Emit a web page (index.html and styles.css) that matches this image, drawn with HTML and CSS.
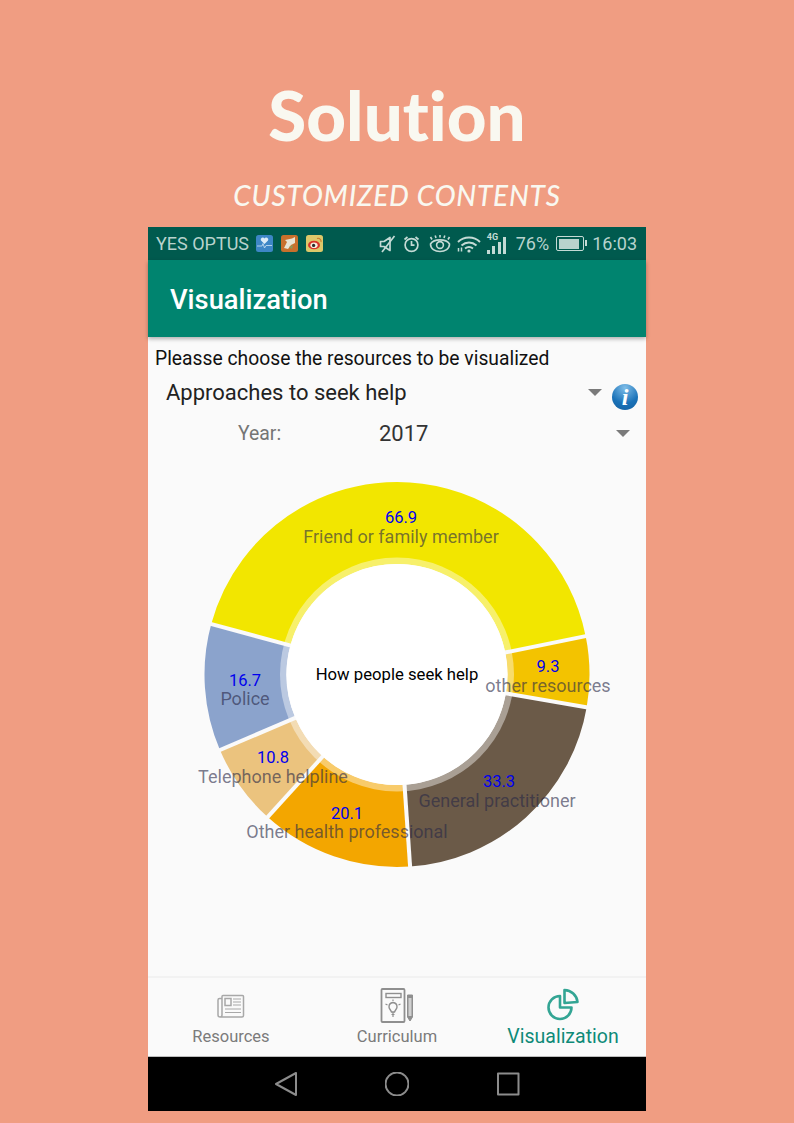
FILE: index.html
```html
<!DOCTYPE html>
<html lang="en">
<head>
    <meta charset="UTF-8">
    <meta name="viewport" content="width=device-width, initial-scale=1.0">
    <title>Solution</title>
    <link rel="stylesheet" href="styles.css">
</head>
<body>

<header class="hero">
    <h1>Solution</h1>
    <h2>CUSTOMIZED CONTENTS</h2>
</header>

<div class="phone">
    <div class="status-bar">
        <span class="carrier">YES OPTUS</span>
        <svg class="app-icon" viewBox="0 0 17 17">
            <rect width="17" height="17" rx="2.5" fill="#3d86c6"/>
            <path d="M8.5 9 L5 5.6 A2 2 0 0 1 8.5 3.6 A2 2 0 0 1 12 5.6 Z" fill="#dcecf7"/>
            <path d="M1 11 H6 L7 8.5 L8.5 13 L10 10.5 H16" fill="none" stroke="#bcd9ee" stroke-width="0.9"/>
        </svg>
        <svg class="app-icon" viewBox="0 0 17 17">
            <rect width="17" height="17" rx="2.5" fill="#c8702c"/>
            <path d="M3 13 L6 7 L4 5 L11 3.5 L14 2 L14 8 L10 10 L7 14 Z" fill="#e8e4d4"/>
            <path d="M8 12 L12 10 L11 14 Z" fill="#8a9a5a"/>
        </svg>
        <svg class="app-icon" viewBox="0 0 17 17">
            <rect width="17" height="17" rx="2.5" fill="#dcc86a"/>
            <ellipse cx="8" cy="10" rx="6" ry="4.3" fill="#d8362a"/>
            <ellipse cx="8" cy="10.2" rx="3.6" ry="2.8" fill="#f6efe0"/>
            <circle cx="7.6" cy="10.4" r="1.6" fill="#2a2a2a"/>
            <path d="M11 3.5 A3 3 0 0 1 15 7" fill="none" stroke="#c9772c" stroke-width="1.1"/>
        </svg>

        <div class="status-right">
            <svg class="s-mute" viewBox="0 0 17 18" fill="none" stroke="#c4dad5" stroke-width="1.7">
                <path d="M1.5 6.5 H5 L11 2.5 V15.5 L5 11.5 H1.5 Z" stroke-linejoin="round"/>
                <path d="M3 17 L15.5 1"/>
            </svg>
            <svg class="s-alarm" viewBox="0 0 17 18" fill="none" stroke="#c4dad5" stroke-width="1.7">
                <circle cx="8.5" cy="10" r="6.4"/>
                <path d="M8.5 6 V10.2 H11.5"/>
                <path d="M1.5 4.5 L4.5 2 M15.5 4.5 L12.5 2"/>
            </svg>
            <svg class="s-eye" viewBox="0 0 22 18" fill="none" stroke="#c4dad5" stroke-width="1.6">
                <path d="M1.5 9 C5 3.5 17 3.5 20.5 9 C20.5 14 16 16.5 11 16.5 C6 16.5 1.5 14 1.5 9 Z"/>
                <circle cx="11" cy="10" r="3.4"/>
                <path d="M3 4.5 L1.5 2 M7 3 L6.2 .5 M11 2.6 V0 M15 3 L15.8 .5 M19 4.5 L20.5 2"/>
            </svg>
            <svg class="s-wifi" viewBox="0 0 24 18" fill="none" stroke="#c4dad5" stroke-width="1.9">
                <path d="M1 7 C7 1 17 1 23 7"/>
                <path d="M4.5 10.5 C9 6.5 15 6.5 19.5 10.5"/>
                <path d="M8 13.6 C10.5 11.6 13.5 11.6 16 13.6"/>
                <circle cx="12" cy="16" r="1.6" fill="#c4dad5" stroke="none"/>
                <path d="M1.5 13 V16.5 M4.5 12.5 V16.5" stroke-width="1.5"/>
            </svg>
            <div class="s-signal">
                <span class="s-4g">4G</span>
                <i class="b1"></i><i class="b2"></i><i class="b3"></i><i class="b4"></i>
            </div>
            <span class="pct">76%</span>
            <div class="battery"><div class="battery-fill"></div></div>
            <span class="clock">16:03</span>
        </div>
    </div>

    <div class="app-bar">Visualization</div>

    <main class="content">
        <p class="prompt">Pleasse choose the resources to be visualized</p>

        <div class="select-row">
            <span class="select-value">Approaches to seek help</span>
            <span class="caret"></span>
            <div class="info-btn">i</div>
        </div>

        <div class="year-row">
            <span class="year-label">Year:</span>
            <span class="year-value">2017</span>
            <span class="caret"></span>
        </div>

        <!-- viewBox uses the page coordinates the chart was measured in -->
        <svg class="chart" viewBox="148 455 498 518">
            <g fill="none" stroke-width="82">
                <circle cx="397" cy="674.5" r="151.5" pathLength="360" stroke="#f2e600" stroke-dasharray="153.3 360" transform="rotate(195.2 397 674.5)"/>
                <circle cx="397" cy="674.5" r="151.5" pathLength="360" stroke="#f3c300" stroke-dasharray="21.3 360" transform="rotate(-11.5 397 674.5)"/>
                <circle cx="397" cy="674.5" r="151.5" pathLength="360" stroke="#6b5a48" stroke-dasharray="76.3 360" transform="rotate(9.8 397 674.5)"/>
                <circle cx="397" cy="674.5" r="151.5" pathLength="360" stroke="#f3a600" stroke-dasharray="46.1 360" transform="rotate(86.1 397 674.5)"/>
                <circle cx="397" cy="674.5" r="151.5" pathLength="360" stroke="#ebc37e" stroke-dasharray="24.7 360" transform="rotate(132.2 397 674.5)"/>
                <circle cx="397" cy="674.5" r="151.5" pathLength="360" stroke="#8ba3cc" stroke-dasharray="38.3 360" transform="rotate(156.9 397 674.5)"/>
            </g>
            <circle cx="397" cy="674.5" r="117" fill="#fff" opacity="0.42"/>
            <g stroke="#fafafa" stroke-width="4">
                <line x1="397" y1="564.5" x2="397" y2="479.5" transform="rotate(285.2 397 674.5)"/>
                <line x1="397" y1="564.5" x2="397" y2="479.5" transform="rotate(78.5 397 674.5)"/>
                <line x1="397" y1="564.5" x2="397" y2="479.5" transform="rotate(99.8 397 674.5)"/>
                <line x1="397" y1="564.5" x2="397" y2="479.5" transform="rotate(176.1 397 674.5)"/>
                <line x1="397" y1="564.5" x2="397" y2="479.5" transform="rotate(222.2 397 674.5)"/>
                <line x1="397" y1="564.5" x2="397" y2="479.5" transform="rotate(246.9 397 674.5)"/>
            </g>
            <circle cx="397" cy="674.5" r="110.5" fill="#fff"/>

            <text class="center-text" x="397" y="680">How people seek help</text>

            <text class="val" x="401" y="523">66.9</text>
            <text class="name" x="401" y="543">Friend or family member</text>
            <text class="val" x="548" y="672">9.3</text>
            <text class="name" x="548" y="692">other resources</text>
            <text class="val" x="499" y="787">33.3</text>
            <text class="name" x="497" y="807">General practitioner</text>
            <text class="val" x="347" y="819">20.1</text>
            <text class="name" x="347" y="838">Other health professional</text>
            <text class="val" x="273" y="763">10.8</text>
            <text class="name" x="273" y="783">Telephone helpline</text>
            <text class="val" x="245" y="686">16.7</text>
            <text class="name" x="245" y="705">Police</text>
        </svg>
    </main>

    <nav class="tabs">
        <div class="tab">
            <svg class="tab-icon" viewBox="0 0 36 36" fill="none" stroke="#a8a8a8" stroke-width="1.5">
                <path d="M9 10.5 H6.5 A1.5 1.5 0 0 0 5 12 V27 A2 2 0 0 0 7 29 H29 A1.5 1.5 0 0 0 30.5 27.5 V8.5 A1 1 0 0 0 29.5 7.5 H10 A1 1 0 0 0 9 8.5 V27 A2 2 0 0 1 7 29"/>
                <rect x="12" y="10.5" width="6" height="7"/>
                <path d="M20 11 H28 M20 14 H28 M20 17 H28 M12 21 H28 M12 24.5 H28" stroke-width="1.2"/>
            </svg>
            <span class="tab-label">Resources</span>
        </div>
        <div class="tab">
            <svg class="tab-icon" viewBox="0 0 36 36" fill="none" stroke="#8f8f8f" stroke-width="1.8">
                <rect x="2.5" y="1" width="23" height="33" rx="1"/>
                <rect x="7" y="5.5" width="15" height="4" stroke-width="1.4"/>
                <path d="M14 14.5 A4.5 4.5 0 0 0 10 19 C10 21 12 22 12.5 24 H15.5 C16 22 18 21 18 19 A4.5 4.5 0 0 0 14 14.5 Z" stroke-width="1.4"/>
                <path d="M12.5 26.5 H15.5 M14 24 V29 M6.5 16 L8.5 17 M21.5 16 L19.5 17 M14 11.5 V13" stroke-width="1.2"/>
                <path d="M28.5 7 H33.5 V29 L31 33 L28.5 29 Z" fill="#8f8f8f" stroke-width="1"/>
                <path d="M29.5 10 H32.5 V28 H29.5 Z" fill="#d0d0d0" stroke="none"/>
            </svg>
            <span class="tab-label">Curriculum</span>
        </div>
        <div class="tab tab-active">
            <svg class="tab-icon" viewBox="0 0 36 36" fill="none" stroke="#33a594" stroke-width="2.6" stroke-linejoin="round">
                <path d="M15 8 A11.5 11.5 0 1 0 26.5 19.5 H15 Z"/>
                <path d="M19.5 2 A13.5 13.5 0 0 1 32.5 14 L19.5 15 Z"/>
            </svg>
            <span class="tab-label">Visualization</span>
        </div>
    </nav>

    <div class="nav-bar">
        <svg class="nav-icon" viewBox="0 0 24 24" fill="none" stroke="#8c8c8c" stroke-width="2" stroke-linejoin="round">
            <path d="M22 1 V23 L2 12 Z"/>
        </svg>
        <svg class="nav-icon" viewBox="0 0 24 24" fill="none" stroke="#8c8c8c" stroke-width="2">
            <circle cx="12" cy="12" r="11.5"/>
        </svg>
        <svg class="nav-icon" viewBox="0 0 24 24" fill="none" stroke="#8c8c8c" stroke-width="2" stroke-linejoin="round">
            <rect x="2" y="1.5" width="20.5" height="21"/>
        </svg>
    </div>
</div>

</body>
</html>
```

FILE: styles.css
```css
body {
    margin: 0;
    background-color: #f09d82;
    font-family: Roboto, "Noto Sans", sans-serif;
}
.hero {
    height: 227px;
    text-align: center;
    font-family: Lato, "Open Sans", sans-serif;
    color: #f9f8f0;
    overflow: hidden;
    font-variant-ligatures: none;
}
.hero h1 {
    margin: 75px 0 0;
    font-size: 69px;
    line-height: 80px;
    font-weight: 900;
}
.hero h2 {
    margin: 22px 0 0;
    font-size: 28px;
    line-height: 36px;
    font-weight: 500;
    font-style: italic;
    letter-spacing: 0.75px;
}
.phone {
    width: 498px;
    margin: 0 auto;
    background: #fafafa;
}
.status-bar {
    height: 33px;
    background: #005a4e;
    color: #b8d3cd;
    display: flex;
    align-items: center;
    padding: 0 9px 0 8px;
    font-size: 18px;
}
.carrier {
    margin-right: 7px;
}
.app-icon {
    width: 17px;
    height: 17px;
    margin-right: 8px;
}
.status-right {
    margin-left: auto;
    display: flex;
    align-items: center;
}
.s-mute {
    width: 17px;
    height: 18px;
    margin-right: 7px;
}
.s-alarm {
    width: 17px;
    height: 18px;
    margin-right: 9px;
}
.s-eye {
    width: 22px;
    height: 18px;
    margin-right: 6px;
}
.s-wifi {
    width: 24px;
    height: 18px;
    margin-right: 6px;
}
.s-signal {
    width: 22px;
    height: 20px;
    margin-right: 7px;
    display: flex;
    align-items: flex-end;
    gap: 2.5px;
    position: relative;
}
.s-signal i {
    display: block;
    width: 3px;
    background: #c4dad5;
}
.s-signal .b1 { height: 4px; }
.s-signal .b2 { height: 8px; }
.s-signal .b3 { height: 12px; }
.s-signal .b4 { height: 17px; }
.s-4g {
    position: absolute;
    left: 0;
    top: -2px;
    font-size: 9px;
    font-weight: 700;
    color: #c4dad5;
}
.pct {
    margin-right: 7px;
}
.battery {
    width: 28px;
    height: 15px;
    border: 1.5px solid #c4dad5;
    border-radius: 2px;
    padding: 1.5px;
    box-sizing: border-box;
    margin-right: 8px;
    position: relative;
}
.battery::after {
    content: "";
    position: absolute;
    right: -4px;
    top: 3px;
    width: 2px;
    height: 6px;
    background: #c4dad5;
}
.battery-fill {
    width: 88%;
    height: 100%;
    background: #b8d3cd;
}
.app-bar {
    height: 77px;
    background: #00846f;
    color: #fff;
    font-size: 27.3px;
    font-weight: 500;
    line-height: 81px;
    padding-left: 22px;
    box-shadow: 0 2px 4px rgba(0, 0, 0, 0.3);
    position: relative;
}
.content {
    height: 639px;
    overflow: hidden;
}
.prompt {
    margin: 11px 0 0 7px;
    font-size: 19.3px;
    line-height: 22px;
    color: #111;
}
.select-row {
    height: 34px;
    margin-top: 5px;
    padding-left: 18px;
    display: flex;
    align-items: center;
    color: #222;
    font-size: 22px;
}
.caret {
    width: 0;
    height: 0;
    border-left: 7.5px solid transparent;
    border-right: 7.5px solid transparent;
    border-top: 7px solid #7a7a7a;
    margin-left: auto;
}
.info-btn {
    width: 26px;
    height: 26px;
    border-radius: 50%;
    margin: 9px 8px 0 10px;
    background: radial-gradient(circle at 50% 15%, #7fbde8, #1a72b8 60%, #1560a0);
    color: #fff;
    font-family: "Liberation Serif", serif;
    font-size: 24px;
    font-weight: 700;
    font-style: italic;
    line-height: 26px;
    text-align: center;
}
.year-row {
    height: 40px;
    margin-top: 4px;
    padding-right: 16px;
    display: flex;
    align-items: center;
}
.year-label {
    width: 141px;
    margin-left: 90px;
    color: #757575;
    font-size: 19.4px;
}
.year-value {
    color: #333;
    font-size: 22px;
}
.chart {
    display: block;
    width: 498px;
    height: 518px;
    margin-top: 2px;
}
.chart text {
    text-anchor: middle;
    font-family: Roboto, "Noto Sans", sans-serif;
}
.val {
    fill: #0000ee;
    font-size: 16.5px;
}
.name {
    fill: rgba(40, 40, 70, 0.62);
    font-size: 18px;
}
.center-text {
    fill: #000;
    font-size: 16.7px;
}
.tabs {
    height: 78px;
    border-top: 2px solid #f2f2f2;
    border-bottom: 1px solid #bdbdbd;
    display: grid;
    grid-template-columns: repeat(3, 1fr);
    background: #fafafa;
}
.tab {
    display: flex;
    flex-direction: column;
    align-items: center;
    padding-top: 10px;
}
.tab-icon {
    width: 36px;
    height: 36px;
    margin-bottom: 3px;
}
.tab-label {
    color: #7b7b7b;
    font-size: 16.5px;
    line-height: 20px;
}
.tab-active .tab-label {
    color: #0e8a78;
    font-size: 19.5px;
}
.nav-bar {
    height: 54px;
    background: #000;
    display: flex;
    align-items: center;
    justify-content: center;
    gap: 87px;
}
.nav-icon {
    width: 24px;
    height: 24px;
}
```
